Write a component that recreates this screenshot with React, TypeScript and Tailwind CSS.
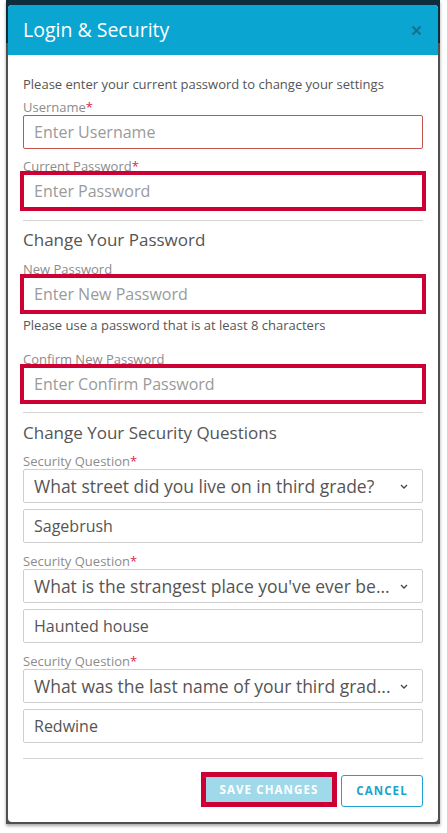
import React from "react";

const font = { fontFamily: '"Open Sans", "Noto Sans", sans-serif' };

function Label({ text, req, className = "" }: { text: string; req?: boolean; className?: string }) {
  return (
    <div className={"text-[13px] leading-4 text-[#8c8c8c] " + className}>
      {text}
      {req && <span className="text-[#d62a4e]">*</span>}
    </div>
  );
}

function Input({
  placeholder,
  value,
  className = "",
  borderCls = "border-[#cfcfcf] rounded-[2px]",
}: {
  placeholder?: string;
  value?: string;
  className?: string;
  borderCls?: string;
}) {
  return (
    <input
      readOnly
      placeholder={placeholder}
      defaultValue={value}
      className={
        "block w-full h-[34px] border px-[10px] text-[16px] text-[#555] placeholder:text-[#9a9a9a] bg-white outline-none " +
        borderCls +
        " " +
        className
      }
      style={font}
    />
  );
}

const hl = "outline-4 outline-solid outline-[#cc0033] outline-offset-[-1px]";
const hlBorder = "border-[#cfcfcf] rounded-none";

function Select({ text }: { text: string }) {
  return (
    <div className="flex items-center w-full h-[34px] border border-[#cfcfcf] rounded-[2px] pl-[10px] pr-[14px] bg-white">
      <div className="flex-1 whitespace-nowrap overflow-hidden text-[17.5px] text-[#555]">{text}</div>
      <svg width="8" height="5" viewBox="0 0 8 5" className="ml-2 shrink-0">
        <polyline points="1,1 4,4 7,1" fill="none" stroke="#444" strokeWidth="1.3" />
      </svg>
    </div>
  );
}

export default function App() {
  return (
    <div className="w-[447px] h-[833px] bg-white overflow-hidden" style={font}>
      <div className="ml-[6px] w-[434px] h-[824px] pt-[5px] px-[2px] bg-[linear-gradient(to_bottom,#0e2c3b_0px,#0e2c3b_43px,#505050_43px)] shadow-[0_2px_3px_rgba(0,0,0,0.35)]">
        <div className="w-[430px] h-[817px] bg-white rounded-[4px] overflow-hidden flex flex-col">
          <div className="h-[50px] shrink-0 bg-[#0ba5d1] px-[15px] flex items-center justify-between">
            <div className="text-[19.5px] text-white leading-6">Login &amp; Security</div>
            <svg width="11" height="11" viewBox="0 0 11 11" className="mr-[1px]">
              <path d="M1.5 1.5 L9.5 9.5 M9.5 1.5 L1.5 9.5" stroke="#1f6f8a" strokeWidth="2.2" strokeLinecap="butt" />
            </svg>
          </div>
          <div className="px-[15px] pt-[21px] flex flex-col">
            <div className="text-[13px] leading-4 text-[#555]">Please enter your current password to change your settings</div>
            <Label text="Username" req className="mt-[7px]" />
            <Input placeholder="Enter Username" borderCls="border-[#c4524f] rounded-[2px]" />
            <Label text="Current Password" req className="mt-[9px]" />
            <Input placeholder="Enter Password" borderCls={hlBorder} className={hl} />
            <div className="mt-[12px] h-px bg-[#d5d5d5]" />
            <div className="mt-[7px] text-[17px] leading-6 text-[#555]">Change Your Password</div>
            <Label text="New Password" className="mt-[9px]" />
            <Input placeholder="Enter New Password" borderCls={hlBorder} className={hl} />
            <div className="mt-[6px] text-[13px] leading-4 text-[#555]">Please use a password that is at least 8 characters</div>
            <Label text="Confirm New Password" className="mt-[18px]" />
            <Input placeholder="Enter Confirm Password" borderCls={hlBorder} className={hl} />
            <div className="mt-[11px] h-px bg-[#d5d5d5]" />
            <div className="mt-[8px] text-[17px] leading-6 text-[#555]">Change Your Security Questions</div>
            <Label text="Security Question" req className="mt-[8px]" />
            <Select text="What street did you live on in third grade?" />
            <Input value="Sagebrush" className="mt-[6px]" />
            <Label text="Security Question" req className="mt-[10px]" />
            <Select text="What is the strangest place you've ever be..." />
            <Input value="Haunted house" className="mt-[6px]" />
            <Label text="Security Question" req className="mt-[10px]" />
            <Select text="What was the last name of your third grad..." />
            <Input value="Redwine" className="mt-[6px]" />
            <div className="mt-[15px] h-px bg-[#d5d5d5]" />
            <div className="mt-[16px] flex items-end justify-end gap-[9px]">
              <button className="mb-[5px] w-[126px] h-[25px] rounded-none bg-[#9fd9ea] text-white text-[11.5px] font-bold tracking-[1.1px] outline-5 outline-solid outline-[#cc0033]">
                SAVE CHANGES
              </button>
              <button className="w-[82px] h-[32px] border border-[#1aa3cd] rounded-[3px] text-[#1aa3cd] text-[11.5px] font-bold tracking-[1.1px] bg-white">
                CANCEL
              </button>
            </div>
          </div>
        </div>
      </div>
    </div>
  );
}
